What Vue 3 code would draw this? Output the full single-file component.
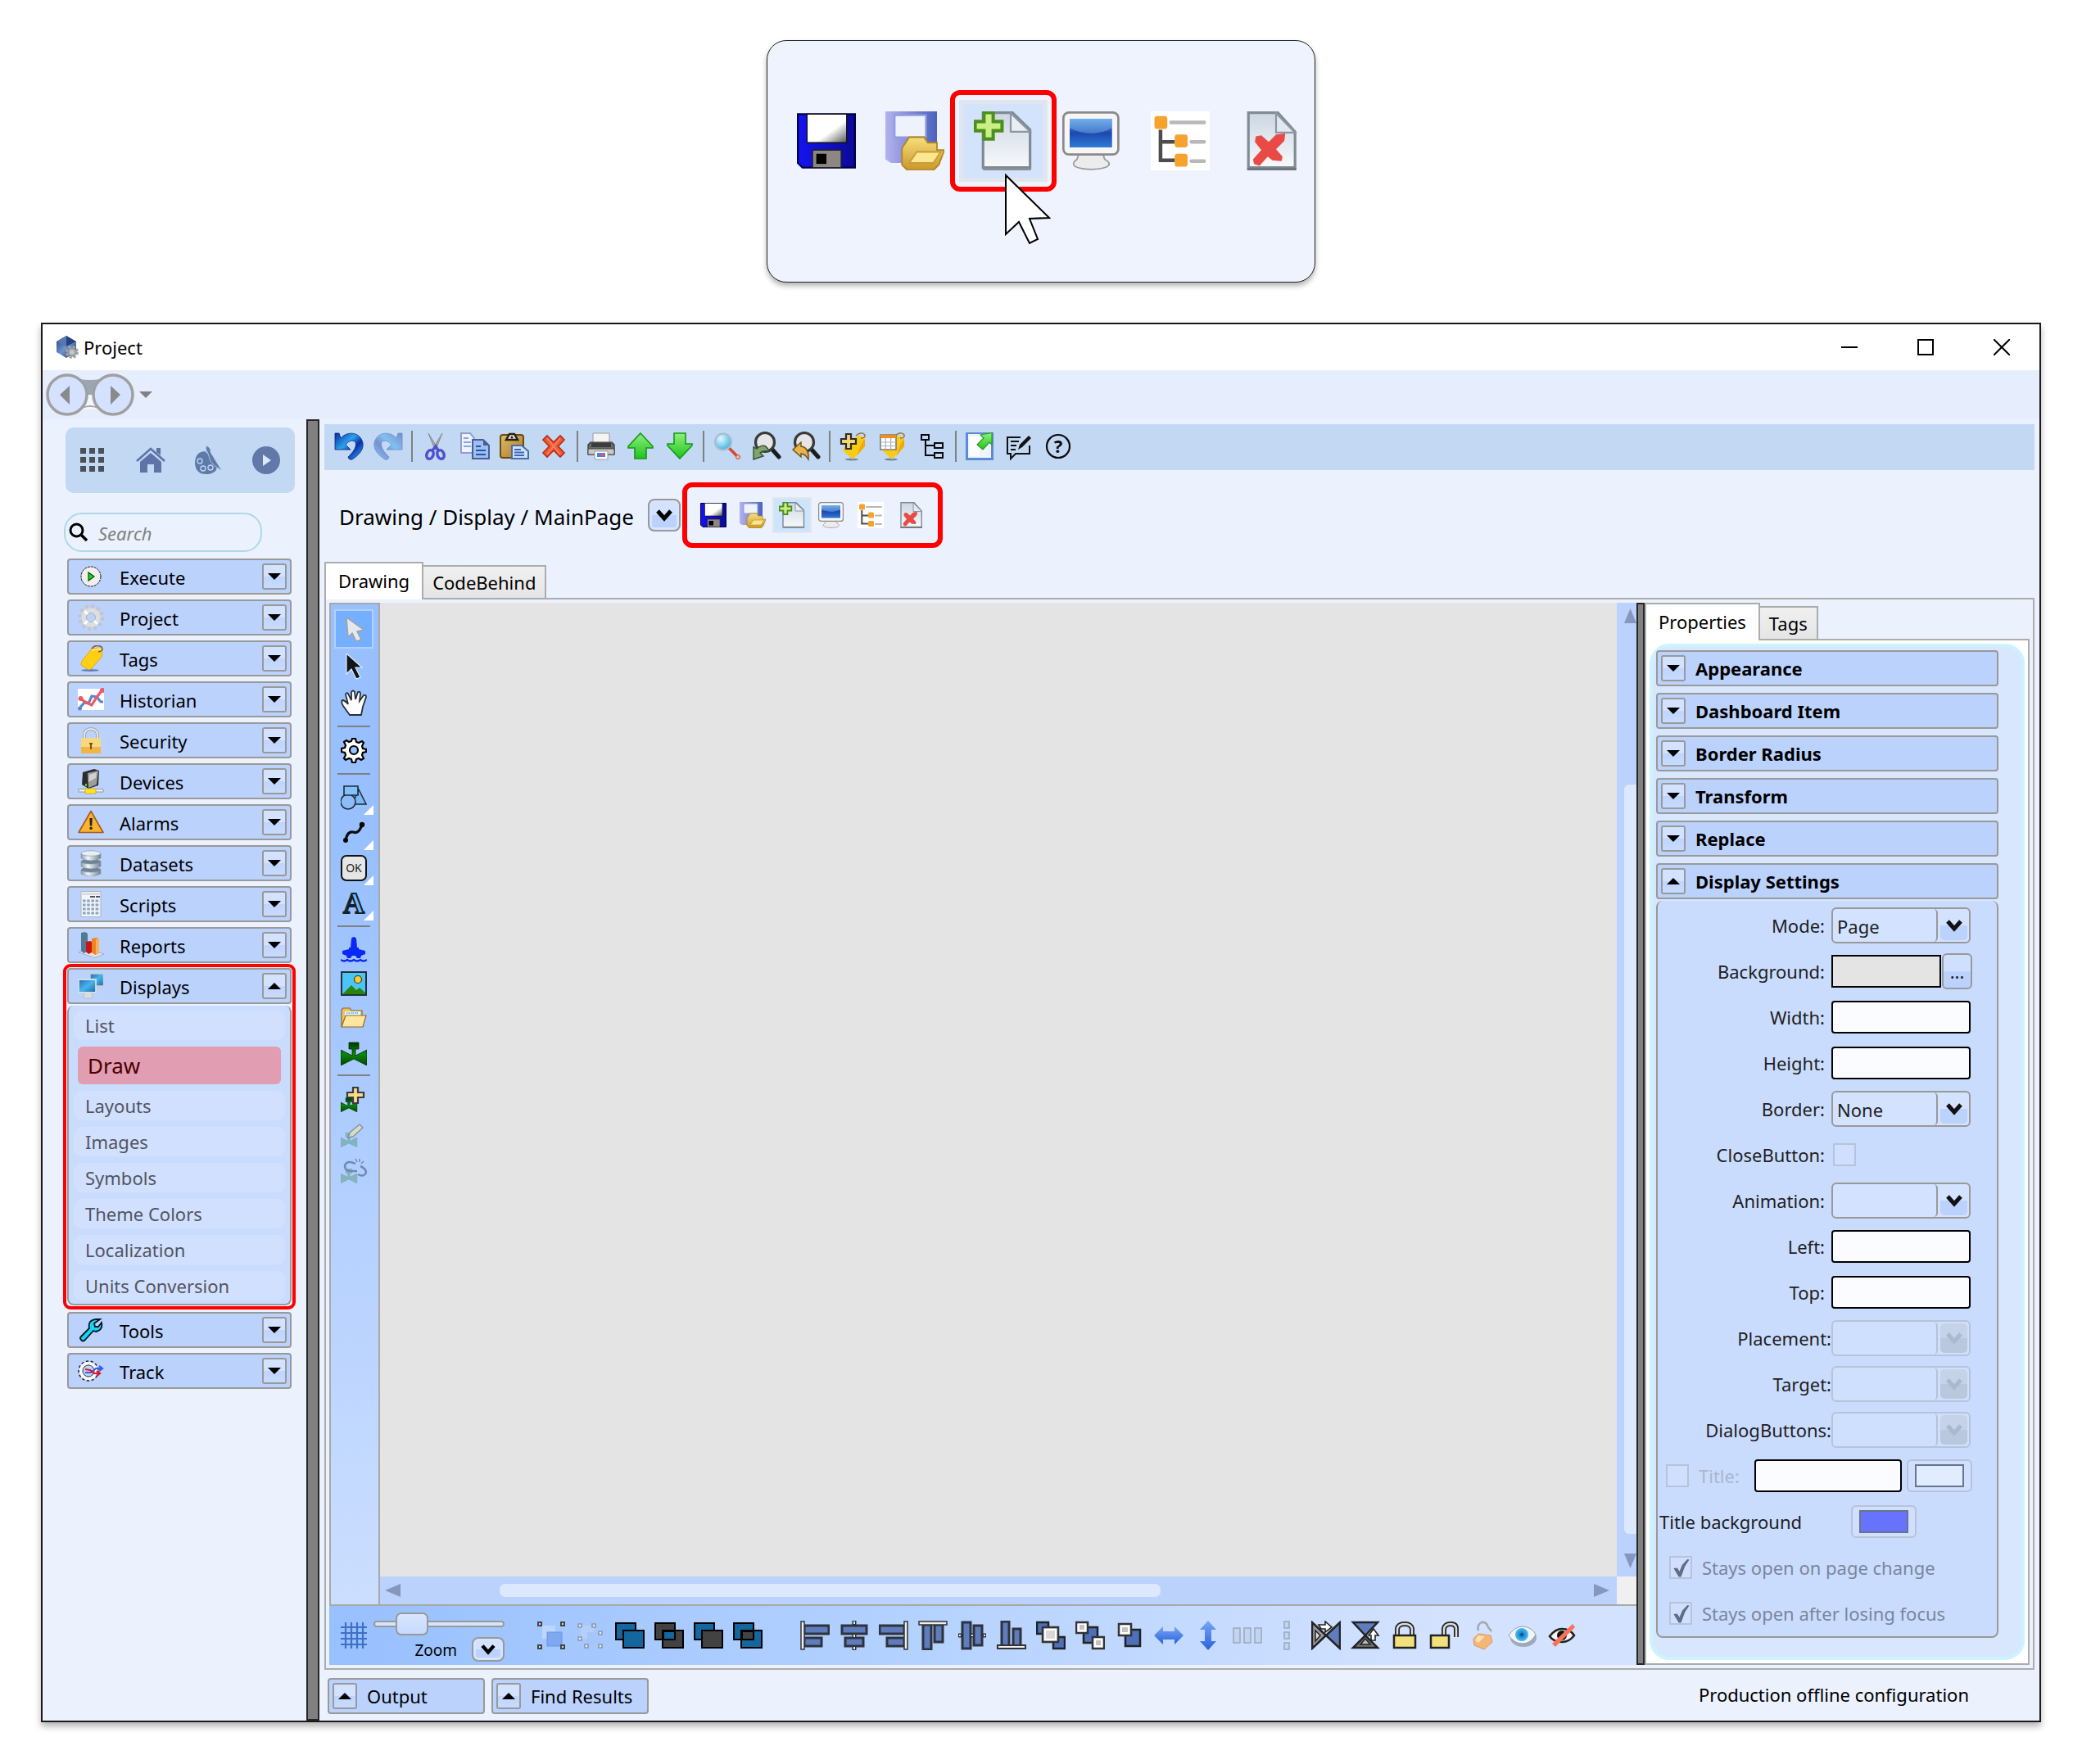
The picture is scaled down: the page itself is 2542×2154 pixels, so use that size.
<script setup>
import { ref } from 'vue'

const quickActions = [
  { icon: 'floppy', label: 'Save' },
  { icon: 'saveopen', label: 'Save and open' },
  { icon: 'newdoc', label: 'New', active: true },
  { icon: 'monitor', label: 'Preview' },
  { icon: 'treelist', label: 'Object tree' },
  { icon: 'deldoc', label: 'Delete' }
]

const mainTools = [
  ['undo', 'redo'],
  ['cut', 'copy', 'paste', 'remove'],
  ['print', 'up', 'down'],
  ['find', 'findprev', 'findnext'],
  ['tagadd', 'tagtable', 'hierarchy'],
  ['export', 'note', 'help']
]

const shortcuts = ['apps', 'home', 'palette', 'play']

const modules = [
  { icon: 'execute', label: 'Execute' },
  { icon: 'gearlight', label: 'Project' },
  { icon: 'tag', label: 'Tags' },
  { icon: 'historian', label: 'Historian' },
  { icon: 'security', label: 'Security' },
  { icon: 'devices', label: 'Devices' },
  { icon: 'alarms', label: 'Alarms' },
  { icon: 'datasets', label: 'Datasets' },
  { icon: 'scripts', label: 'Scripts' },
  { icon: 'reports', label: 'Reports' },
  {
    icon: 'displays',
    label: 'Displays',
    items: ['List', 'Draw', 'Layouts', 'Images', 'Symbols', 'Theme Colors', 'Localization', 'Units Conversion']
  },
  { icon: 'tools', label: 'Tools' },
  { icon: 'track', label: 'Track' }
]

const toolbox = [
  { cls: 'tall', items: [{ icon: 'pointer', on: true }, { icon: 'direct' }, { icon: 'hand' }] },
  { cls: 'tall', items: [{ icon: 'gear' }] },
  { cls: 'mid', items: [{ icon: 'shapes', more: true }, { icon: 'curve', more: true }, { icon: 'okbutton', more: true }, { icon: 'letter', more: true }] },
  { cls: 'low', items: [{ icon: 'buoy' }, { icon: 'image' }, { icon: 'folder' }, { icon: 'valve' }] },
  { cls: 'tall', items: [{ icon: 'valveadd' }, { icon: 'valveedit' }, { icon: 'valveunlink' }] }
]

const arrangeTools = [
  ['group', 'ungroup', 'union', 'xor', 'subtract', 'intersect'],
  ['alignleft', 'aligncenter', 'alignright', 'aligntop', 'alignmiddle', 'alignbottom', 'tofront', 'toback', 'backward',
    'samewidth', 'sameheight', 'spreadx', 'spready', 'fliph', 'flipv', 'lock', 'unlock', 'unlockall', 'eye', 'eyeoff']
]

// icons that carry a character on top of their shape
const glyphs = {
  help: { char: '?', x: 18, y: 26, cls: 'g-help' },
  alarms: { char: '!', x: 16, y: 25, cls: 'g-alarm' },
  okbutton: { char: 'OK', x: 16, y: 21, cls: 'g-ok' },
  letter: { char: 'A', x: 16, y: 28, cls: 'g-letter' }
}

const sections = ['Appearance', 'Dashboard Item', 'Border Radius', 'Transform', 'Replace', 'Display Settings']

const fields = [
  { label: 'Mode', kind: 'select', value: 'Page' },
  { label: 'Background', kind: 'color' },
  { label: 'Width', kind: 'text' },
  { label: 'Height', kind: 'text' },
  { label: 'Border', kind: 'select', value: 'None' },
  { label: 'CloseButton', kind: 'check' },
  { label: 'Animation', kind: 'select', value: '' },
  { label: 'Left', kind: 'text' },
  { label: 'Top', kind: 'text' },
  { label: 'Placement', kind: 'select', value: '', off: true },
  { label: 'Target', kind: 'select', value: '', off: true },
  { label: 'DialogButtons', kind: 'select', value: '', off: true }
]

const zoom = ref(32)
</script>

<template>
  <svg class="defs" aria-hidden="true">
    <defs>
      <linearGradient id="g-undo" x1="0" y1="0" x2="1" y2="1"><stop offset="0" stop-color="#0a2a9c" /><stop offset=".4" stop-color="#2aa4f0" /><stop offset=".62" stop-color="#0a2fa8" /><stop offset="1" stop-color="#38c0ff" /></linearGradient>
      <linearGradient id="g-shutter" x1="0" y1="0" x2="1" y2="1"><stop offset=".6" stop-color="#fff" /><stop offset="1" stop-color="#555" /></linearGradient>
      <linearGradient id="g-floppy" x1="0" x2="1"><stop offset="0" stop-color="#1414f0" /><stop offset="1" stop-color="#0a0a98" /></linearGradient>
      <linearGradient id="g-lav" x1="0" x2="1"><stop offset="0" stop-color="#b4b2ee" /><stop offset="1" stop-color="#4a62c0" /></linearGradient>
      <linearGradient id="g-gold" x1="0" y1="0" x2="0" y2="1"><stop offset="0" stop-color="#f7df7c" /><stop offset="1" stop-color="#c9972a" /></linearGradient>
      <linearGradient id="g-paper" x1="0" y1="0" x2="0" y2="1"><stop offset="0" stop-color="#ccd7e3" /><stop offset="1" stop-color="#f7f9fb" /></linearGradient>
      <linearGradient id="g-screen" x1="0" y1="0" x2="0" y2="1"><stop offset="0" stop-color="#5da0e8" /><stop offset=".5" stop-color="#1c49ae" /><stop offset="1" stop-color="#2f7ad6" /></linearGradient>
      <linearGradient id="g-teal" x1="0" y1="0" x2="1" y2="1"><stop offset="0" stop-color="#1c6db4" /><stop offset=".5" stop-color="#4bb4e8" /><stop offset="1" stop-color="#1765a8" /></linearGradient>
      <linearGradient id="g-green" x1="0" y1="0" x2="0" y2="1"><stop offset="0" stop-color="#8df07a" /><stop offset="1" stop-color="#1fc41f" /></linearGradient>
      <linearGradient id="g-silver" x1="0" x2="1"><stop offset="0" stop-color="#8a9cab" /><stop offset=".35" stop-color="#f2f6f8" /><stop offset="1" stop-color="#708494" /></linearGradient>
      <linearGradient id="g-clip" x1="0" y1="0" x2="1" y2="1"><stop offset="0" stop-color="#e0bc6c" /><stop offset="1" stop-color="#a87a24" /></linearGradient>
      <linearGradient id="g-blue" x1="0" y1="0" x2="0" y2="1"><stop offset="0" stop-color="#7aa6f6" /><stop offset="1" stop-color="#2a62d8" /></linearGradient>
      <linearGradient id="g-cube" x1="0" y1="0" x2="1" y2="1"><stop offset="0" stop-color="#1d3a7a" /><stop offset=".5" stop-color="#6f96cc" /><stop offset="1" stop-color="#122858" /></linearGradient>
      <linearGradient id="g-valve" x1="0" y1="0" x2="0" y2="1"><stop offset="0" stop-color="#003800" /><stop offset=".5" stop-color="#0a8a0a" /><stop offset="1" stop-color="#004800" /></linearGradient>
      <radialGradient id="g-lens" cx=".35" cy=".3" r=".8"><stop offset="0" stop-color="#e2f8ff" /><stop offset="1" stop-color="#33aede" /></radialGradient>
      <radialGradient id="g-eye"><stop offset="0" stop-color="#0a2a60" /><stop offset=".35" stop-color="#1e8ad0" /><stop offset="1" stop-color="#4cc0f0" /></radialGradient>
      <g id="valvebody"><path d="M0 13L14 20V12H10V4H22V12H18V20L32 13V32L16 24L0 32Z" /></g>
    </defs>

    <symbol id="i-chev" viewBox="0 0 20 16"><path d="M2 3L10 12L18 3" fill="none" stroke="currentColor" stroke-width="5" /></symbol>
    <symbol id="i-tri" viewBox="0 0 16 8"><path d="M0 0H16L8 8Z" fill="currentColor" /></symbol>

    <symbol id="i-floppy" viewBox="0 0 32 32"><path d="M.5 1.5H31.5V30.5H3L.5 28Z" fill="url(#g-floppy)" stroke="#00004a" /><path d="M5.500 1.500H27V17H5.500Z" fill="url(#g-shutter)" stroke="#111" stroke-width=".6" /><path d="M8.500 21H24V30.500H8.500Z" fill="#8d8682" stroke="#222" stroke-width=".6" /><path d="M10.500 23H16V28.500H10.500Z" fill="#000" /></symbol>
    <symbol id="i-saveopen" viewBox="0 0 32 32"><path d="M0 0H28V28H3L0 26Z" fill="url(#g-lav)" /><path d="M5 2H22V14H5Z" fill="#eef2fc" stroke="#8f9be0" /><path d="M13 14H21L23 17H28V21H32L29 29L26 32H12L9 29V20Z" fill="url(#g-gold)" stroke="#b18622" stroke-width=".8" /><path d="M13 28L17 22H30L26 28Z" fill="#fbe88e" stroke="#c79c38" stroke-width=".8" /></symbol>
    <symbol id="i-newdoc" viewBox="0 0 32 32"><path d="M5 0.700H21L30.500 10V30.500H5Z" fill="url(#g-paper)" stroke="#7d8994" stroke-width="1.400" /><path d="M20 1V11H30.500Z" fill="#e9eef3" stroke="#8b97a3" /><path d="M5 31.300H31" stroke="#8a8f94" stroke-width="1.400" /><path d="M5.500 .7H10.500V5.500H15.300V10.500H10.500V15H5.500V10.500H.7V5.500H5.500Z" fill="#c9ef86" stroke="#4c8f1c" stroke-width="1.800" /></symbol>
    <symbol id="i-monitor" viewBox="0 0 32 32"><path d="M9 23H22L23 26C27 28 27 31 16 31.500C4 31 5 28 8 26Z" fill="#ececee" stroke="#9a9a9a" stroke-width=".8" /><rect x=".6" y=".6" width="29.800" height="22.800" rx="3" fill="#f6f6f6" stroke="#8a8a8a" stroke-width="1.200" /><path d="M4 4H27V19.500H4Z" fill="url(#g-screen)" /><path d="M4 4H27V9Q16 15 4 9Z" fill="#8fc4f6" opacity=".4" /></symbol>
    <symbol id="i-treelist" viewBox="0 0 32 32"><path d="M0 0H32V32H0Z" fill="#fff" /><path d="M5.300 10V26.500H13M5.300 16.500H13" fill="none" stroke="#4d4d4d" stroke-width="2" /><path d="M11 6H29M22 16.500H29M22 27H29" stroke="#b8b8b8" stroke-width="2" stroke-linecap="round" /><g fill="#f5a32c"><rect x="2" y="2.500" width="7" height="7" rx="1.500" /><rect x="13" y="12.500" width="7" height="7" rx="1.500" /><rect x="13" y="23" width="7" height="7" rx="1.500" /></g></symbol>
    <symbol id="i-deldoc" viewBox="0 0 32 32"><path d="M5 .7H21L30.300 11V30.500H5Z" fill="url(#g-paper)" stroke="#7f8b95" stroke-width="1.400" /><path d="M20 1V11.500H30.300Z" fill="#e3e9ee" stroke="#8b97a3" /><path d="M4.300 31.300H31" stroke="#6f777e" stroke-width="1.400" /><path d="M9 13.500L12 13L16 16.500L20 12.500L25 12L24.500 16L20 20.500L23.500 24.500L23 27L18 26.500L15.500 24.500L11 29.500L8 28.500L7.500 26L12 21L8.500 16.500Z" fill="#ea4a46" /></symbol>

    <symbol id="i-undo" viewBox="0 0 36 36"><path d="M1 2V22H20L14 16C19 9 27 10 26.500 16C26 22 21 27 17 31Q18 35 22 34C31 28 36 22 35 14C32 0 16 -1 8 8L6 2Z" fill="url(#g-undo)" stroke="#0a2080" stroke-width=".8" /></symbol>
    <symbol id="i-redo" viewBox="0 0 36 36"><g transform="matrix(-1 0 0 1 36 0)" opacity=".42"><path d="M1 2V22H20L14 16C19 9 27 10 26.500 16C26 22 21 27 17 31Q18 35 22 34C31 28 36 22 35 14C32 0 16 -1 8 8L6 2Z" fill="url(#g-undo)" stroke="#0a2080" stroke-width=".8" /></g></symbol>
    <symbol id="i-cut" viewBox="0 0 36 36"><path d="M9 2L20 20L17 22ZM26 2L15 20L18 22Z" fill="#a8a8a8" stroke="#8c8c8c" /><g fill="none" stroke="#5050d0" stroke-width="3.500"><ellipse cx="11" cy="28" rx="4" ry="5.500" transform="rotate(20 11 28)" /><ellipse cx="24" cy="28" rx="4" ry="5.500" transform="rotate(-20 24 28)" /><path d="M14 23L18 18L21 23" /></g></symbol>
    <symbol id="i-copy" viewBox="0 0 36 36"><path d="M1 2H12L17 8V26H1Z" fill="#eef3fc" stroke="#8e9fd0" stroke-width="2" /><path d="M4 8H10M4 13H13M4 18H13" stroke="#8aa6dc" stroke-width="2" /><path d="M15 10H28L35 17V33H15Z" fill="#9cc0f4" stroke="#4a5e96" stroke-width="2" /><path d="M28 10V17H35Z" fill="#4a5e96" /><path d="M19 18H25M19 23H31M19 28H31" stroke="#2a52a4" stroke-width="2" /></symbol>
    <symbol id="i-paste" viewBox="0 0 36 36"><rect x="1" y="4" width="28" height="28" rx="3" fill="url(#g-clip)" stroke="#6c4a10" stroke-width="2" /><path d="M8 10L12 3H18L22 10Z" fill="#e8e8e8" stroke="#2a2010" stroke-width="2.500" /><circle cx="15" cy="7" r="1.500" fill="#222" /><path d="M15 17H27L35 24V33H15Z" fill="#cfe2fc" stroke="#4f6ba6" stroke-width="2" /><path d="M18 22H26M18 25.500H30M18 29H30" stroke="#3e66b8" stroke-width="2" /></symbol>
    <symbol id="i-remove" viewBox="0 0 36 36"><path d="M10 5L18 13L26 5L31 10L23.500 18L31 26L26 31L18 23L10 31L5 26L12.500 18L5 10Z" fill="#ee5a34" stroke="#b82a14" stroke-width="1.600" /><path d="M10 8L26 28M26 8L10 28" stroke="#f99878" stroke-width="1.500" opacity=".7" /></symbol>
    <symbol id="i-print" viewBox="0 0 36 36"><path d="M8 2H28V14H8Z" fill="#f4f4f4" stroke="#9a9a9a" /><path d="M5 13H31L34 16V28H2V16Z" fill="#6b6b6b" stroke="#333" stroke-width="1.200" /><path d="M6 14H30V19H6Z" fill="#3c3c3c" /><path d="M2 21H34V28H2Z" fill="#c9c9c9" stroke="#444" /><path d="M10 24H26V34H10Z" fill="#fff" stroke="#999" /><path d="M13 26H23V31H13Z" fill="#4a7cf0" /><path d="M18 27H22V30H18Z" fill="#e8584a" /></symbol>
    <symbol id="i-up" viewBox="0 0 36 36"><path d="M18 2L33 18V20H25V33H11V20H3V18Z" fill="url(#g-green)" stroke="#17961a" stroke-width="1.600" /></symbol>
    <symbol id="i-down" viewBox="0 0 36 36"><path d="M18 33L33 17V15H25V2H11V15H3V17Z" fill="url(#g-green)" stroke="#17961a" stroke-width="1.600" /></symbol>
    <symbol id="i-find" viewBox="0 0 36 36"><path d="M20 20L30 30" stroke="#d24a34" stroke-width="3.500" /><circle cx="31" cy="31" r="2.500" fill="#f8b8a8" stroke="#c24a34" /><circle cx="13" cy="12.500" r="10" fill="url(#g-lens)" stroke="#a9bccb" stroke-width="2" /></symbol>
    <symbol id="i-findprev" viewBox="0 0 36 36"><path d="M25 22L33 31" stroke="#1c1c1c" stroke-width="5" stroke-linecap="round" /><circle cx="16" cy="13" r="11.500" fill="#e6e6e6" stroke="#3a3a3a" stroke-width="3.200" /><path d="M2 34V19L6 21Q16 12 21 24Q13 23 10 26L14 30Z" fill="#7fa46e" stroke="#3a4e34" stroke-width="1.400" /></symbol>
    <symbol id="i-findnext" viewBox="0 0 36 36"><path d="M25 22L33 31" stroke="#1c1c1c" stroke-width="5" stroke-linecap="round" /><circle cx="16" cy="13" r="11.500" fill="#e6e6e6" stroke="#3a3a3a" stroke-width="3.200" /><path d="M2 22L12 13V18Q22 19 21 34Q17 27 12 27V31Z" fill="#e9b24a" stroke="#6c5018" stroke-width="1.400" /></symbol>
    <symbol id="i-tagadd" viewBox="0 0 36 36"><ellipse cx="16" cy="34" rx="8" ry="1.500" fill="#6d86a4" /><path d="M12 10L26 5L32 9V18L17 34L5 23Z" fill="#fbcb14" /><path d="M22 30L32 18V9L28 14Z" fill="#f3a80c" /><path d="M21 5Q28 -1 32 4Q33 8 27 8" fill="none" stroke="#9a7436" stroke-width="1.500" /><path d="M9 3H15V9H21V15H15V21H9V15H3V9H9Z" fill="#f4d774" stroke="#2e2e2e" stroke-width="2.200" /></symbol>
    <symbol id="i-tagtable" viewBox="0 0 36 36"><ellipse cx="16" cy="34" rx="8" ry="1.500" fill="#6d86a4" /><path d="M12 10L26 5L32 9V18L17 34L5 23Z" fill="#fbcb14" /><path d="M22 30L32 18V9L28 14Z" fill="#f3a80c" /><path d="M21 5Q28 -1 32 4Q33 8 27 8" fill="none" stroke="#9a7436" stroke-width="1.500" /><path d="M3 4H22V22H3Z" fill="#fff" stroke="#7b7b7b" stroke-width="1.600" /><path d="M3 4H22V8H3Z" fill="#f28e16" /><path d="M3 13H22M3 17.500H22M9.300 8V22M15.600 8V22" stroke="#a8b2bc" stroke-width="1.200" /></symbol>
    <symbol id="i-hierarchy" viewBox="0 0 36 36"><path d="M5 4H14V10H5ZM21 14H31V20H21ZM21 26H31V32H21ZM10 10V29H21M10 17H21" fill="none" stroke="#0a0a0a" stroke-width="2" /></symbol>
    <symbol id="i-export" viewBox="0 0 36 36"><path d="M1 1H35V35H1Z" fill="#5c8ad8" /><path d="M4 3H32V32H4Z" fill="#eef5ff" /><path d="M6 6H18V30H6Z" fill="#fff" /><path d="M19 4L33 1.500V16L30 13L22 22L15 16L23 8Z" fill="url(#g-green)" stroke="#2a9a24" stroke-width="1.200" /></symbol>
    <symbol id="i-note" viewBox="0 0 36 36"><path d="M20 7H4V27H8V33L14 27H31V17" fill="none" stroke="#111" stroke-width="2" /><path d="M8 12H18M8 17H15M8 22H14" stroke="#111" stroke-width="2" /><path d="M17 22L19 16L30 5L33 8L22 19Z" fill="#111" /></symbol>
    <symbol id="i-help" viewBox="0 0 36 36"><circle cx="18" cy="18" r="14" fill="none" stroke="#0a0a0a" stroke-width="2.200" /></symbol>

    <symbol id="i-apps" viewBox="0 0 36 36"><path d="M3 3H10V10H3ZM14 3H21V10H14ZM25 3H32V10H25ZM3 14H10V21H3ZM14 14H21V21H14ZM25 14H32V21H25ZM3 25H10V32H3ZM14 25H21V32H14ZM25 25H32V32H25Z" fill="#4a5258" /></symbol>
    <symbol id="i-home" viewBox="0 0 36 36"><path d="M1 19L18 4L35 19" fill="none" stroke="#5e74a8" stroke-width="2.500" /><path d="M25 3H30V12L25 8Z" fill="#5e74a8" /><path d="M5 20L18 9L31 20V33H22V23H14V33H5Z" fill="#5e74a8" /></symbol>
    <symbol id="i-palette" viewBox="0 0 36 36"><path d="M14 7Q2 8 2 22Q3 35 16 35Q28 35 29 26L20 12Z" fill="#5e7ba8" /><g fill="none" stroke="#c2d8f3" stroke-width="1.300"><circle cx="8" cy="19" r="3" /><circle cx="12" cy="28" r="3" /><circle cx="21" cy="27" r="3" /></g><path d="M16 0Q22 3 21 8L35 31Q24 24 21 19L18 10Q14 5 16 0Z" fill="#5e7ba8" stroke="#c2d8f3" stroke-width=".8" /></symbol>
    <symbol id="i-play" viewBox="0 0 36 36"><circle cx="18" cy="18" r="17" fill="#6178a8" /><path d="M14 11V25L24 18Z" fill="#dbe7fa" /></symbol>
    <symbol id="i-search" viewBox="0 0 24 24"><circle cx="9.500" cy="9.500" r="7.500" fill="none" stroke="#000" stroke-width="3" /><path d="M15 15L22 22" stroke="#000" stroke-width="3.500" /></symbol>
    <symbol id="i-cube" viewBox="0 0 28 28"><path d="M12 0L24 7V20L12 27L0 20V7Z" fill="url(#g-cube)" /><path d="M12 0V13L0 7Z" fill="#5878b4" /><path d="M12 0V13L24 7Z" fill="#24427e" /><circle cx="19" cy="20" r="6" fill="none" stroke="#a7a7a7" stroke-width="4" stroke-dasharray="3 1.700" /><circle cx="19" cy="20" r="4.500" fill="#b8c4da" stroke="#9a9a9a" stroke-width="2.500" /></symbol>

    <symbol id="i-execute" viewBox="0 0 32 32"><circle cx="16" cy="16" r="12" fill="#efefef" stroke="#111" stroke-width="1" stroke-dasharray="3 1" /><path d="M13 11V21L20 16Z" fill="#10e010" stroke="#0a4a0a" stroke-width="1.200" /></symbol>
    <symbol id="i-gearlight" viewBox="0 0 32 32"><circle cx="16" cy="16" r="13.500" fill="none" stroke="#c4c4c4" stroke-width="5" stroke-dasharray="3.500 3.568" /><circle cx="16" cy="16" r="8.500" fill="none" stroke="#dedede" stroke-width="6" /><circle cx="16" cy="16" r="5.500" fill="none" stroke="#b0b0b0" stroke-width="1" /><path d="M8 8L12 12M24 24L20 20M8 24L12 20" stroke="#fff" stroke-width="3" /></symbol>
    <symbol id="i-tag" viewBox="0 0 32 32"><ellipse cx="15" cy="30.500" rx="11" ry="1.500" fill="#5b82bc" /><path d="M17 4L27 3L30 9L29 14L17 28Q14 31 12 29L4 24Q4 20 6 18Z" fill="#ffcf16" stroke="#e9a70c" /><path d="M17 6L27 4L29 8" fill="none" stroke="#fff2a0" stroke-width="1.500" /><path d="M17 4Q22 -2 29 2Q32 7 25 8" fill="none" stroke="#8a5a2c" stroke-width="1.600" /></symbol>
    <symbol id="i-historian" viewBox="0 0 32 32"><path d="M0 3H32V29H0Z" fill="#fff" /><path d="M1 28L8 20L13 21L17 12L23 13L28 19L31 19" fill="none" stroke="#5c86cc" stroke-width="3.200" /><path d="M3 15L9 19L17 23L22 15L30 4" fill="none" stroke="#ea5a62" stroke-width="3.200" /><circle cx="3.500" cy="15" r="3" fill="#ea5a62" /><circle cx="30" cy="5" r="3" fill="#ea5a62" /><circle cx="2.500" cy="27" r="2.500" fill="#5c86cc" /></symbol>
    <symbol id="i-security" viewBox="0 0 32 32"><path d="M8 15V9Q9 2 16 2Q23 2 24 9V15" fill="none" stroke="#a3acb2" stroke-width="4" /><path d="M8 15V9Q9 2 16 2Q23 2 24 9V15" fill="none" stroke="#eef2f4" stroke-width="1.600" /><rect x="4" y="13" width="24" height="19" rx="1.500" fill="#f9d77c" /><path d="M4 24H28V32H4Z" fill="#ef9f1c" opacity=".6" /><path d="M16 19V27M14 20H18" stroke="#7a5418" stroke-width="2" /></symbol>
    <symbol id="i-devices" viewBox="0 0 32 32"><path d="M6 5L20 1L26 3L25 21L13 25L5 20Z" fill="#2c2c2c" /><path d="M12 6L25 3L23 20L13 24Z" fill="#9c9c9c" /><path d="M14 8L23 5L22 12L13 17Z" fill="#d0d0d0" /><path d="M9 19H11V22H9Z" fill="#3fe04a" /><path d="M1 25.500H31V29H1Z" fill="#eee" stroke="#888" stroke-width=".8" /><path d="M9 25H22V31H9Z" fill="#ffe12c" stroke="#caa30a" stroke-width=".8" /></symbol>
    <symbol id="i-alarms" viewBox="0 0 32 32"><path d="M16 2.500L31 28.500H1Z" fill="#f9b32c" stroke="#a8561c" stroke-width="1.600" stroke-linejoin="round" /></symbol>
    <symbol id="i-datasets" viewBox="0 0 32 32"><g stroke="#7f92a2" stroke-width=".6"><path d="M4 24V29Q16 35 28 29V24Z" fill="url(#g-silver)" /><ellipse cx="16" cy="24" rx="12" ry="3" fill="#6f8494" /><path d="M4 14V20Q16 26 28 20V14Z" fill="url(#g-silver)" /><ellipse cx="16" cy="14" rx="12" ry="3" fill="#6f8494" /><path d="M4 4V10Q16 16 28 10V4Z" fill="url(#g-silver)" /><ellipse cx="16" cy="4" rx="12" ry="3.200" fill="#e8eef2" /></g></symbol>
    <symbol id="i-scripts" viewBox="0 0 32 32"><path d="M4 .5H28V31.500H4Z" fill="#f2f5f8" stroke="#aab4be" /><path d="M4 2H28V5H4Z" fill="#d8dee4" /><path d="M15 7H27" stroke="#222" stroke-width="1.500" stroke-dasharray="6 1" /><g stroke="#8ba6bf" stroke-width="3" stroke-dasharray="3.600 1.600"><path d="M6 12H27M6 17H27M6 22H27M6 27H27" /></g></symbol>
    <symbol id="i-reports" viewBox="0 0 32 32"><path d="M1 25L12 20L32 27L21 31.500Z" fill="#dfe3ea" stroke="#9aa2ae" stroke-width=".8" /><path d="M4 1L9 0L12 2V24L7 26L4 23Z" fill="#527a94" /><path d="M10 12L15 11L17 12V25L13 27L10 24Z" fill="#cc1414" /><path d="M17 8L23 7L26 9V26L21 28L17 25Z" fill="#ee8420" /><path d="M22 9L26 8V26L22 28Z" fill="#f9b060" /></symbol>
    <symbol id="i-displays" viewBox="0 0 32 32"><path d="M24 16H28L30 19H22Z" fill="#c8ccd2" /><path d="M15 1H31.500V16H15Z" fill="url(#g-teal)" stroke="#c5d0da" stroke-width="1.500" /><path d="M9 24H16L19 30Q12 33 6 30Z" fill="#d9dde2" stroke="#a4aab2" stroke-width=".6" /><path d="M1 8H22V24H1Z" fill="url(#g-teal)" stroke="#d4dce4" stroke-width="1.800" /></symbol>
    <symbol id="i-tools" viewBox="0 0 32 32"><path d="M27 3L20 8L21 12L25 12L29 7Q31 16 22 18L19 17L9 28Q6 31 4 28Q2 26 4 24L14 14Q12 4 22 3Z" fill="#18d4fa" stroke="#06161c" stroke-width="1.800" /></symbol>
    <symbol id="i-track" viewBox="0 0 32 32"><circle cx="13" cy="16" r="11" fill="none" stroke="#222" stroke-width="3.500" stroke-dasharray="3 2.400" /><circle cx="13" cy="16" r="9.500" fill="#f6f8fc" stroke="#f6f8fc" stroke-width="3.500" /><circle cx="13" cy="16" r="7" fill="#bbd2fd" stroke="#333" stroke-width="1" /><path d="M9 18L16 18L22 13H29M26 10L30 13L26 16" fill="none" stroke="#3a5ce8" stroke-width="2.200" /><path d="M9 14L15 15L20 19H26M23 16L27 19L23 22" fill="none" stroke="#d81c24" stroke-width="2.200" /></symbol>

    <symbol id="i-pointer" viewBox="0 0 32 32"><path d="M7 2L9 26L14 21L19 31L25 29L20 19L28 17Z" fill="#e6e9ec" stroke="#a2a2a2" stroke-width="1.500" /></symbol>
    <symbol id="i-direct" viewBox="0 0 32 32"><path d="M7 0V25L13 19L19 31L24 29L18 17L26 17Z" fill="#10161c" stroke="#e4edf8" stroke-width="1.200" /></symbol>
    <symbol id="i-hand" viewBox="0 0 32 32"><path d="M11 31L3 20Q0 15 2 13Q5 13 9 18L6 6Q7 3 9 5L13 13L13 3Q15 0 17 3L18 12L21 3Q24 2 24 5L23 14L28 7Q31 6 31 9L27 21L25 31Z" fill="#fff" stroke="#2a2f38" stroke-width="1.800" /></symbol>
    <symbol id="i-gear" viewBox="0 0 32 32"><path d="M14 2H18L19 6L22 7L26 5L28 7L26 11L27 14L31 15V18L27 19L26 22L28 26L25 28L22 26L19 27L18 31H14L13 27L10 26L6 28L4 26L6 22L5 19L1 18V14L5 13L6 10L4 6L7 4L10 6L13 5Z" fill="#fff" stroke="#000" stroke-width="2.200" /><circle cx="16" cy="16" r="5" fill="#9cc4ff" stroke="#000" stroke-width="2.200" /></symbol>
    <symbol id="i-shapes" viewBox="0 0 32 32"><path d="M22 6L31 24H14Z" fill="#7ab8f8" stroke="#1c2a38" stroke-width="1.500" /><circle cx="9" cy="21" r="9" fill="#8cbdf8" stroke="#1c2a38" stroke-width="1.500" /><path d="M4 2H21V13H4Z" fill="#84c0fa" stroke="#1c2a38" stroke-width="1.600" /></symbol>
    <symbol id="i-curve" viewBox="0 0 32 32"><path d="M6 25Q8 14 15 15Q22 18 26 6" fill="none" stroke="#0c0c0c" stroke-width="3.200" /><circle cx="6" cy="25" r="3" /><circle cx="26" cy="6" r="3.200" /></symbol>
    <symbol id="i-okbutton" viewBox="0 0 32 32"><rect x="1" y="1" width="30" height="30" rx="6" fill="#e6e6e6" stroke="#111" stroke-width="2" /></symbol>
    <symbol id="i-letter" viewBox="0 0 32 32"><path d="M2 28H2Z" /></symbol>
    <symbol id="i-buoy" viewBox="0 0 32 32"><path d="M12 14L13 3Q16 -1 19 3L20 14L22 14V16L30 18V22L25 24L24 27H20L18 24H14L12 27H8L7 24L2 22V18L10 16V14Z" fill="#0a28f8" /><path d="M0 29Q4 32 8 29Q12 32 16 29Q20 32 24 29Q28 32 32 29" fill="none" stroke="#0a28f8" stroke-width="2.200" /></symbol>
    <symbol id="i-image" viewBox="0 0 32 32"><path d="M1 2H31V30H1Z" fill="#4cc4f6" /><path d="M1 30L13 18L19 24L23 21L31 28V30Z" fill="#2a8408" /><circle cx="21" cy="11" r="4.500" fill="#f6cf2e" stroke="#333" stroke-width="1.200" /><path d="M1 2H31V30H1Z" fill="none" stroke="#22303a" stroke-width="2" /></symbol>
    <symbol id="i-folder" viewBox="0 0 32 32"><path d="M1 27V6L3 4H11L13 7H26V13" fill="#ecc264" stroke="#8c6a24" stroke-width="1.200" /><path d="M5 8H24V14H5Z" fill="#eef8fc" /><path d="M7 10H22" stroke="#6cb8d8" stroke-width="2" stroke-dasharray="1.500 1" /><path d="M1 27L6 13H31L27 27Z" fill="#ffe6a0" stroke="#8c6a24" stroke-width="1.200" /></symbol>
    <symbol id="i-valve" viewBox="0 0 32 32"><use href="#valvebody" fill="url(#g-valve)" stroke="#022a02" stroke-width=".8" /></symbol>
    <symbol id="i-valveadd" viewBox="0 0 32 32"><g transform="translate(0 12) scale(.62)"><use href="#valvebody" fill="url(#g-valve)" stroke="#022a02" /></g><path d="M15 2H21V8H28V14H21V21H15V14H8V8H15Z" fill="#f6dd84" stroke="#3a3a44" stroke-width="2.200" /></symbol>
    <symbol id="i-valveedit" viewBox="0 0 32 32"><g transform="translate(0 11) scale(.62)" opacity=".35"><use href="#valvebody" fill="#2a8a4a" stroke="#1c5a3a" /></g><path d="M9 19L11 13L23 3L27 7L15 18Z" fill="#dfe2b8" stroke="#7c8c9c" stroke-width="1.500" opacity=".85" /></symbol>
    <symbol id="i-valveunlink" viewBox="0 0 32 32"><g transform="translate(0 11) scale(.62)" opacity=".35"><use href="#valvebody" fill="#2a8a4a" stroke="#1c5a3a" /></g><g fill="none" stroke="#7189b4" stroke-width="2.500"><path d="M18 7Q8 2 5 9Q5 17 14 16H20M24 10Q31 13 31 18Q28 24 21 20" /><path d="M18 1L20 5M23 1V5M28 4L25 7" stroke-width="1.500" /></g></symbol>

    <symbol id="i-grid" viewBox="0 0 36 36"><path d="M8 2V34M15 2V34M22 2V34M29 2V34M2 8H34M2 15H34M2 22H34M2 29H34" stroke="#3e70c8" stroke-width="2.200" /></symbol>
    <symbol id="i-group" viewBox="0 0 36 36"><path d="M7 6H23V22H7Z" fill="#bcd6fc" /><path d="M13 14H31V31H13Z" fill="#7fa8f0" stroke="#6a94e4" /><path d="M2 2H6V6H2ZM30 2H34V6H30ZM2 30H6V34H2ZM30 30H34V34H30Z" fill="#ddd" stroke="#444" stroke-width="2" /></symbol>
    <symbol id="i-ungroup" viewBox="0 0 36 36"><path d="M6 6H22V22H6Z" fill="#b4d0fa" /><path d="M14 14H30V30H14Z" fill="#a4c6fa" /><path d="M3 4H7V8H3ZM20 4H24V8H20ZM3 20H7V24H3ZM28 13H32V17H28ZM11 29H15V33H11ZM28 29H32V33H28Z" fill="#e4ecf8" stroke="#8c98ac" stroke-width="1.600" /></symbol>
    <symbol id="i-union" viewBox="0 0 36 36"><path d="M1 3H25V23H1Z" fill="#14669e" stroke="#000" stroke-width="2" /><path d="M10 12H35V33H10Z" fill="#14669e" stroke="#000" stroke-width="2" /></symbol>
    <symbol id="i-xor" viewBox="0 0 36 36"><path d="M1 3H25V23H1ZM10 12H35V33H10Z" fill="#424242" stroke="#000" stroke-width="2" /><path d="M11 13H25V23H11Z" fill="#14669e" stroke="#000" stroke-width="2" /></symbol>
    <symbol id="i-subtract" viewBox="0 0 36 36"><path d="M1 3H25V23H1Z" fill="#14669e" stroke="#000" stroke-width="2" /><path d="M10 12H35V33H10Z" fill="#424242" stroke="#000" stroke-width="2" /></symbol>
    <symbol id="i-intersect" viewBox="0 0 36 36"><path d="M1 3H25V23H1ZM10 12H35V33H10Z" fill="#14669e" stroke="#000" stroke-width="2" /><path d="M11 13H25V23H11Z" fill="#424242" stroke="#000" stroke-width="2" /></symbol>
    <symbol id="i-alignleft" viewBox="0 0 36 36"><path d="M5 6H35V16H5ZM5 21H26V31H5Z" fill="#5f7dbc" stroke="#2e323c" stroke-width="3" /><path d="M1 1H5V35H1Z" fill="#eee" stroke="#333" stroke-width="1.500" /></symbol>
    <symbol id="i-aligncenter" viewBox="0 0 36 36"><path d="M18 0V36" stroke="#333" stroke-width="5" /><path d="M3 6H33V16H3ZM7 21H29V31H7Z" fill="#5f7dbc" stroke="#2e323c" stroke-width="3" /><path d="M18 1V4M18 17V20M18 32V35" stroke="#eee" stroke-width="2" /></symbol>
    <symbol id="i-alignright" viewBox="0 0 36 36"><path d="M1 6H31V16H1ZM10 21H31V31H10Z" fill="#5f7dbc" stroke="#2e323c" stroke-width="3" /><path d="M31 1H35V35H31Z" fill="#eee" stroke="#333" stroke-width="1.500" /></symbol>
    <symbol id="i-aligntop" viewBox="0 0 36 36"><path d="M6 5H16V35H6ZM20 5H30V26H20Z" fill="#5f7dbc" stroke="#2e323c" stroke-width="3" /><path d="M1 1H35V5H1Z" fill="#eee" stroke="#333" stroke-width="1.500" /></symbol>
    <symbol id="i-alignmiddle" viewBox="0 0 36 36"><path d="M1 18H35" stroke="#333" stroke-width="5" /><path d="M6 2H16V34H6ZM20 6H30V30H20Z" fill="#5f7dbc" stroke="#2e323c" stroke-width="3" /><path d="M2 18H4M17 18H19M32 18H34" stroke="#eee" stroke-width="2" /></symbol>
    <symbol id="i-alignbottom" viewBox="0 0 36 36"><path d="M6 1H15V31H6ZM20 10H29V31H20Z" fill="#5f7dbc" stroke="#2e323c" stroke-width="3" /><path d="M1 30H35V34H1Z" fill="#eee" stroke="#333" stroke-width="2" /></symbol>
    <symbol id="i-tofront" viewBox="0 0 36 36"><path d="M1 2H15V16H1ZM21 20H35V34H21Z" fill="#4d70b8" stroke="#222" stroke-width="2.500" /><path d="M8 8H27V26H8Z" fill="#d8d8d8" stroke="#333" stroke-width="2.500" /><path d="M11 11H24V23H11Z" fill="none" stroke="#fff" stroke-width="2" /></symbol>
    <symbol id="i-toback" viewBox="0 0 36 36"><path d="M10 8H27V27H10Z" fill="#4d70b8" stroke="#222" stroke-width="2.500" /><path d="M1 2H15V15H1ZM21 20H35V34H21Z" fill="#fff" stroke="#333" stroke-width="2.500" /><path d="M5 5H11V11H5ZM25 24H31V30H25Z" fill="#c2c2c2" /></symbol>
    <symbol id="i-backward" viewBox="0 0 36 36"><path d="M13 11H31V31H13Z" fill="#4d70b8" stroke="#222" stroke-width="2.500" /><path d="M5 4H20V18H5Z" fill="#fff" stroke="#333" stroke-width="2.500" /><path d="M9 8H16V14H9Z" fill="#c2c2c2" /></symbol>
    <symbol id="i-samewidth" viewBox="0 0 36 36"><path d="M0 18L11 7V13H25V7L36 18L25 29V23H11V29Z" fill="url(#g-blue)" /></symbol>
    <symbol id="i-sameheight" viewBox="0 0 36 36"><path d="M18 0L28 11H22V25H28L18 36L8 25H14V11H8Z" fill="url(#g-blue)" /></symbol>
    <symbol id="i-spreadx" viewBox="0 0 36 36"><path d="M1 9H9V27H1ZM14 9H22V27H14ZM27 9H35V27H27Z" fill="#c3d4ee" stroke="#98a8c0" stroke-width="1.500" /></symbol>
    <symbol id="i-spready" viewBox="0 0 36 36"><path d="M15 1H21V9H15ZM15 14H21V22H15ZM15 27H21V35H15Z" fill="#c3d4ee" stroke="#98a8c0" stroke-width="1.500" /></symbol>
    <symbol id="i-fliph" viewBox="0 0 36 36"><path d="M35 2V34L18 18Z" fill="#5f7dbc" stroke="#222" stroke-width="2.500" /><path d="M1 2V34L18 18Z" fill="#9a9a9a" stroke="#222" stroke-width="2.500" /><path d="M5 12V25L11 18Z" fill="#ddd" stroke="#222" stroke-width="1.500" /><path d="M9 5H17V1L25 8L17 14V10H12Z" fill="#fff" stroke="#222" stroke-width="1.600" /></symbol>
    <symbol id="i-flipv" viewBox="0 0 36 36"><path d="M3 2H33L18 18Z" fill="#5f7dbc" stroke="#222" stroke-width="2.500" /><path d="M3 33H33L18 18Z" fill="#777" stroke="#222" stroke-width="2.500" /><path d="M12 29H24L18 22Z" fill="#bbb" stroke="#222" stroke-width="1.500" /><path d="M28 10L34 18H30V24H25V18H22Z" fill="#fff" stroke="#222" stroke-width="1.600" /></symbol>
    <symbol id="i-lock" viewBox="0 0 36 36"><path d="M9 18V10Q10 4 18 4Q26 4 27 10V18" fill="none" stroke="#222" stroke-width="6" /><path d="M9 18V10Q10 4 18 4Q26 4 27 10V18" fill="none" stroke="#ddd" stroke-width="2.500" /><path d="M5 18H31V33H5Z" fill="#f2e07c" stroke="#222" stroke-width="2.500" /></symbol>
    <symbol id="i-unlock" viewBox="0 0 36 36"><path d="M18 18V10Q19 4 26 4Q33 4 33 10V20" fill="none" stroke="#222" stroke-width="6" /><path d="M18 18V10Q19 4 26 4Q33 4 33 10V20" fill="none" stroke="#ddd" stroke-width="2.500" /><path d="M2 18H24V33H2Z" fill="#f2e07c" stroke="#222" stroke-width="2.500" /></symbol>
    <symbol id="i-unlockall" viewBox="0 0 36 36"><path d="M12 12Q10 5 16 2Q22 1 24 8L28 13" fill="none" stroke="#a4a8ae" stroke-width="2.500" /><path d="M12 16L27 18L29 26L19 35L7 30L6 22Z" fill="#f5b676" stroke="#d69a5e" /><path d="M12 18L20 19L12 27L8 24Z" fill="#fbe0b8" /></symbol>
    <symbol id="i-eye" viewBox="0 0 36 36"><ellipse cx="19" cy="21" rx="16" ry="11" fill="#7c8694" opacity=".6" /><path d="M1 18Q8 7 18 7Q30 8 34 17Q28 28 18 28Q8 28 1 18Z" fill="#f2f4f6" stroke="#98a0aa" /><circle cx="17" cy="17" r="8" fill="url(#g-eye)" /></symbol>
    <symbol id="i-eyeoff" viewBox="0 0 36 36"><path d="M3 19Q10 10 18 10Q28 10 33 18Q27 26 18 26Q8 26 3 19Z" fill="#f4f4f4" stroke="#222" stroke-width="2.500" /><circle cx="18" cy="18" r="6" fill="#111" /><path d="M31 4L34 8L10 32L6 28Z" fill="#fb7058" /></symbol>

    <symbol id="i-cursor" viewBox="0 0 56 88"><path d="M1 3V75L17 60L30 86L40 81L30 56L54 55Z" fill="#fff" stroke="#000" stroke-width="2" /></symbol>
    <symbol id="i-navpair" viewBox="0 0 108 52"><path d="M28 4Q54 12 80 4V30H28Z" fill="#9ca5b4" /><path d="M40 26H70V44H40Z" fill="#f3f6ff" /><path d="M36 46Q54 34 72 46" fill="none" stroke="#a8a8a8" stroke-width="2" /><g fill="#d5e2ff" stroke="#a0a0a0" stroke-width="3.500"><circle cx="26" cy="26" r="24" /><circle cx="82" cy="26" r="24" /></g><path d="M29 15V38L17 26ZM79 15V38L91 26Z" fill="#8a8a8a" /></symbol>
  </svg>

  <div class="page">
    <section class="callout" aria-label="Toolbar detail">
      <div v-for="a in quickActions" :key="a.icon" class="slot" :class="{ lit: a.active }">
        <svg><use :href="'#i-' + a.icon" /></svg>
        <template v-if="a.active">
          <span class="ring"></span>
          <svg class="cursor"><use href="#i-cursor" /></svg>
        </template>
      </div>
    </section>

    <div class="window">
      <header class="titlebar">
        <svg class="appicon"><use href="#i-cube" /></svg>
        <span class="apptitle">Project</span>
        <div class="winbtns">
          <button aria-label="Minimize"><svg viewBox="0 0 20 20"><path d="M0 10H20" stroke="#000" stroke-width="2" /></svg></button>
          <button aria-label="Maximize"><svg viewBox="0 0 20 20"><path d="M1 1H19V19H1Z" fill="none" stroke="#000" stroke-width="2" /></svg></button>
          <button aria-label="Close"><svg viewBox="0 0 20 20"><path d="M0 0L20 20M20 0L0 20" stroke="#000" stroke-width="2" /></svg></button>
        </div>
      </header>

      <div class="navstrip">
        <svg class="navpair"><use href="#i-navpair" /></svg>
        <svg class="tri"><use href="#i-tri" /></svg>
      </div>

      <div class="columns">
        <aside class="sidebar">
          <div class="shortcuts">
            <button v-for="s in shortcuts" :key="s" :aria-label="s"><svg><use :href="'#i-' + s" /></svg></button>
          </div>
          <div class="search">
            <svg><use href="#i-search" /></svg>
            <input type="text" placeholder="Search" aria-label="Search" />
          </div>
          <nav class="modules">
            <div v-for="m in modules" :key="m.label" class="module" :class="{ open: m.items }">
              <div class="bar">
                <svg class="icon">
                  <use :href="'#i-' + m.icon" />
                  <text v-if="glyphs[m.icon]" :class="glyphs[m.icon].cls" :x="glyphs[m.icon].x" :y="glyphs[m.icon].y">{{ glyphs[m.icon].char }}</text>
                </svg>
                <span>{{ m.label }}</span>
                <button class="toggle" :class="{ up: m.items }" :aria-label="m.label"><svg><use href="#i-tri" /></svg></button>
              </div>
              <div v-if="m.items" class="submenu">
                <a v-for="i in m.items" :key="i" href="#" :class="{ current: i === 'Draw' }">{{ i }}</a>
              </div>
              <span v-if="m.items" class="mark"></span>
            </div>
          </nav>
        </aside>

        <div class="splitter"></div>

        <main class="main">
          <div class="toolbar">
            <div v-for="(g, n) in mainTools" :key="n" class="toolgroup">
              <button v-for="t in g" :key="t" :aria-label="t">
                <svg>
                  <use :href="'#i-' + t" />
                  <text v-if="glyphs[t]" :class="glyphs[t].cls" :x="glyphs[t].x" :y="glyphs[t].y">{{ glyphs[t].char }}</text>
                </svg>
              </button>
            </div>
          </div>

          <div class="crumbs">
            <h1>Drawing / Display / MainPage</h1>
            <button class="drop" aria-label="Choose display"><svg><use href="#i-chev" /></svg></button>
            <div class="quick">
              <button v-for="a in quickActions" :key="a.icon" :class="{ lit: a.active }" :aria-label="a.label"><svg><use :href="'#i-' + a.icon" /></svg></button>
            </div>
          </div>

          <div class="tabs">
            <button class="tab on">Drawing</button>
            <button class="tab">CodeBehind</button>
          </div>

          <div class="workspace">
            <div class="editor">
              <div class="stage">
                <div class="toolbox">
                  <div v-for="(g, n) in toolbox" :key="n" class="boxgroup" :class="g.cls">
                    <button v-for="t in g.items" :key="t.icon" :class="{ on: t.on, more: t.more }" :aria-label="t.icon">
                      <svg>
                        <use :href="'#i-' + t.icon" />
                        <text v-if="glyphs[t.icon]" :class="glyphs[t.icon].cls" :x="glyphs[t.icon].x" :y="glyphs[t.icon].y">{{ glyphs[t.icon].char }}</text>
                      </svg>
                    </button>
                  </div>
                </div>
                <div class="viewport">
                  <div class="canvas"></div>
                  <div class="vscroll"><i class="arrow north"></i><span></span><i class="arrow south"></i></div>
                  <div class="hscroll"><i class="arrow west"></i><span></span><i class="arrow east"></i></div>
                  <div class="corner"></div>
                </div>
              </div>

              <div class="arrange">
                <button class="gridbtn" aria-label="Grid"><svg><use href="#i-grid" /></svg></button>
                <div class="zoom">
                  <input id="zoom" v-model="zoom" type="range" min="0" max="150" />
                  <div class="zoomrow">
                    <label for="zoom">Zoom</label>
                    <button class="drop small" aria-label="Zoom levels"><svg><use href="#i-chev" /></svg></button>
                  </div>
                </div>
                <div v-for="(g, n) in arrangeTools" :key="n" class="arrgroup">
                  <button v-for="t in g" :key="t" :aria-label="t"><svg><use :href="'#i-' + t" /></svg></button>
                </div>
              </div>
            </div>

            <div class="splitter thin"></div>

            <div class="props">
              <div class="tabs">
                <button class="tab on">Properties</button>
                <button class="tab">Tags</button>
              </div>
              <div class="propbody">
                <div class="glow">
                  <div v-for="s in sections" :key="s" class="section">
                    <button class="toggle" :class="{ up: s === 'Display Settings' }" :aria-label="s"><svg><use href="#i-tri" /></svg></button>
                    <h2>{{ s }}</h2>
                  </div>

                  <form class="settings" @submit.prevent>
                    <div v-for="f in fields" :key="f.label" class="field" :class="{ tight: f.off }">
                      <label :for="'f-' + f.label">{{ f.label }}:</label>
                      <div v-if="f.kind === 'select'" class="combo" :class="{ off: f.off }">
                        <select :id="'f-' + f.label" :disabled="f.off"><option>{{ f.value }}</option></select>
                        <span class="comboarrow"><svg><use href="#i-chev" /></svg></span>
                      </div>
                      <template v-else-if="f.kind === 'color'">
                        <input :id="'f-' + f.label" class="swatchbox" type="text" readonly />
                        <button class="dots" type="button">...</button>
                      </template>
                      <input v-else-if="f.kind === 'check'" :id="'f-' + f.label" class="box" type="checkbox" disabled />
                      <input v-else :id="'f-' + f.label" class="text" type="text" />
                    </div>

                    <div class="field titlerow">
                      <input id="f-title-on" class="box" type="checkbox" disabled />
                      <label for="f-title-on" class="dim">Title:</label>
                      <input class="text wide" type="text" aria-label="Title text" />
                      <button class="pick" type="button" aria-label="Title color"><span class="pale"></span></button>
                    </div>
                    <div class="field bgrow">
                      <label for="f-titlebg">Title background</label>
                      <button id="f-titlebg" class="pick" type="button"><span class="violet"></span></button>
                    </div>
                    <div class="field checkrow">
                      <input id="f-stay1" class="box" type="checkbox" checked disabled />
                      <label for="f-stay1">Stays open on page change</label>
                    </div>
                    <div class="field checkrow">
                      <input id="f-stay2" class="box" type="checkbox" checked disabled />
                      <label for="f-stay2">Stays open after losing focus</label>
                    </div>
                  </form>
                </div>
              </div>
            </div>
          </div>

          <footer class="status">
            <div class="dock"><button class="toggle up" aria-label="Output"><svg><use href="#i-tri" /></svg></button><span>Output</span></div>
            <div class="dock"><button class="toggle up" aria-label="Find Results"><svg><use href="#i-tri" /></svg></button><span>Find Results</span></div>
            <p>Production offline configuration</p>
          </footer>
        </main>
      </div>
    </div>
  </div>
</template>

<style>
body {
  background: #fff;
}
</style>

<style scoped>
.defs {
  position: absolute;
  width: 0;
  height: 0;
}

.page {
  box-sizing: border-box;
  padding: 49px 50px;
  font-family: "Noto Sans", "Open Sans", sans-serif;
  font-size: 22px;
  line-height: 30px;
  color: #000;
}

.page *,
.page *::before,
.page *::after {
  box-sizing: border-box;
}

button {
  display: flex;
  align-items: center;
  justify-content: center;
  margin: 0;
  padding: 0;
  border: 0;
  background: none;
  font: inherit;
  color: inherit;
}

input,
select {
  margin: 0;
  font: inherit;
  color: inherit;
}

svg {
  display: block;
  flex: none;
}

svg text {
  text-anchor: middle;
}

.g-help {
  font-size: 22px;
  font-weight: 700;
  fill: #0a0a0a;
}

.g-alarm {
  font-size: 19px;
  font-weight: 700;
  fill: #222;
}

.g-ok {
  font-size: 14px;
  fill: #222;
}

.g-letter {
  font-family: "Liberation Serif", serif;
  font-size: 36px;
  font-weight: 700;
  fill: #74b8f0;
  stroke: #14222e;
  stroke-width: 2px;
}

/* callout */
.callout {
  display: flex;
  width: 670px;
  height: 296px;
  margin: 0 auto 49px;
  padding: 72px 0 0 18px;
  border: 1px solid #222;
  border-radius: 24px;
  background: #eff3fe;
  box-shadow: 0 4px 6px rgba(0, 0, 0, .3);
}

.slot {
  position: relative;
  display: flex;
  align-items: center;
  justify-content: center;
  width: 108px;
  height: 100px;
}

.slot svg {
  width: 72px;
  height: 72px;
}

.slot.lit {
  border: 5px solid #e1e6ee;
  background: #d3e3fc;
}

.ring {
  position: absolute;
  inset: -17px -16px;
  border: 6px solid #f00;
  border-radius: 12px;
}

.slot .cursor {
  position: absolute;
  top: 84px;
  left: 51px;
  width: 56px;
  height: 88px;
}

/* window frame */
.window {
  border: 2px solid #1a1a1a;
  background: #ebf2fe;
  box-shadow: 0 5px 8px rgba(0, 0, 0, .3);
}

.titlebar {
  display: flex;
  align-items: center;
  height: 56px;
  padding: 0 36px 0 17px;
  background: #fff;
}

.appicon {
  width: 28px;
  height: 28px;
}

.apptitle {
  margin-left: 5px;
}

.winbtns {
  display: flex;
  gap: 73px;
  margin-left: auto;
}

.winbtns svg {
  width: 20px;
  height: 20px;
}

.navstrip {
  display: flex;
  align-items: center;
  gap: 6px;
  height: 60px;
  padding-left: 4px;
  background: #e6edfd;
}

.navpair {
  width: 108px;
  height: 52px;
}

.tri {
  width: 16px;
  height: 8px;
  color: #808080;
}

.columns {
  display: flex;
}

.splitter {
  flex: none;
  width: 16px;
  border: 2px solid #262626;
  background: #808080;
}

.splitter.thin {
  width: 10px;
}

/* sidebar */
.sidebar {
  flex: none;
  width: 322px;
  padding: 10px 14px 0 26px;
}

.shortcuts {
  display: flex;
  align-items: center;
  justify-content: space-between;
  height: 80px;
  margin-left: 2px;
  padding: 0 17px 0 15px;
  border-radius: 10px;
  background: #c2d8f3;
}

.shortcuts svg {
  width: 36px;
  height: 36px;
}

.search {
  display: flex;
  align-items: center;
  width: 242px;
  height: 48px;
  margin: 24px 0 8px;
  padding-left: 4px;
  border: 2px solid #add8e6;
  border-radius: 22px;
}

.search svg {
  width: 24px;
  height: 24px;
  margin-right: 10px;
}

.search input {
  width: 180px;
  height: 36px;
  padding: 2px 0 0 2px;
  border: 0;
  background: none;
  font-style: italic;
}

.search input::placeholder {
  color: #808080;
}

.modules {
  display: flex;
  flex-direction: column;
  gap: 6px;
  margin: 0 4px;
}

.module {
  position: relative;
}

.module.open {
  margin-bottom: 2px;
}

.mark {
  position: absolute;
  inset: -5px;
  border: 4px solid #f00;
  border-radius: 9px;
  pointer-events: none;
}

.bar {
  display: flex;
  align-items: center;
  height: 44px;
  padding: 0 4px 0 11px;
  border: 2px solid #999;
  border-radius: 4px;
  background: #bbd2fd;
}

.icon {
  width: 32px;
  height: 32px;
  margin-right: 19px;
}

.bar span {
  flex: 1;
  padding-top: 2px;
}

.toggle {
  flex: none;
  width: 30px;
  height: 32px;
  border: 2px solid #999;
  border-radius: 3px;
  background: linear-gradient(#d3e2ff 50%, #bfd5fe 50%, #c8dbfe);
}

.toggle svg {
  width: 16px;
  height: 8px;
}

.toggle.up svg {
  transform: rotate(180deg);
}

.submenu {
  display: flex;
  flex-direction: column;
  gap: 8px;
  margin-top: 2px;
  padding: 6px 6px 4px;
  border: 2px solid #999;
  border-top: 0;
  border-radius: 8px;
  background: #cadcfe;
}

.submenu a {
  height: 36px;
  padding-left: 14px;
  border-radius: 10px;
  background: #d2e0ff;
  line-height: 36px;
  color: #50555e;
  text-decoration: none;
}

.submenu a.current {
  height: 46px;
  margin: 0 5px;
  padding-left: 12px;
  border-radius: 6px;
  background: #e19db1;
  font-size: 26px;
  line-height: 46px;
  color: #4a0000;
}

/* main column */
.main {
  flex: 1;
  min-width: 0;
  padding: 6px 6px 0;
}

.toolbar {
  display: flex;
  height: 56px;
  padding: 0 0 2px 6px;
  background: #c2d8f3;
}

.toolgroup {
  display: flex;
  align-items: center;
}

.toolgroup + .toolgroup::before {
  content: "";
  width: 2px;
  height: 38px;
  margin: 0 4px;
  background: #808080;
}

.toolgroup button,
.arrgroup button {
  width: 48px;
  height: 48px;
}

.toolgroup svg,
.arrgroup svg {
  width: 36px;
  height: 36px;
}

.crumbs {
  display: flex;
  align-items: center;
  height: 80px;
  margin: 15px 0 17px;
  padding-left: 18px;
}

h1 {
  margin: 4px 17px 0 0;
  font-size: 26px;
  line-height: 36px;
  font-weight: 400;
  white-space: nowrap;
}

.drop {
  width: 40px;
  height: 40px;
  border: 2px solid #999;
  border-radius: 8px;
  background: linear-gradient(#d3e2ff 50%, #bbd2fd 50%);
  box-shadow: inset 0 0 0 3px #d6e4ff;
}

.drop svg {
  width: 20px;
  height: 16px;
}

.quick {
  display: flex;
  align-items: center;
  height: 80px;
  margin-left: 2px;
  padding: 0 10px 0 8px;
  border: 6px solid #f00;
  border-radius: 12px;
}

.quick button {
  width: 48px;
  height: 44px;
}

.quick button.lit {
  border: 2px solid #e3e6ea;
  background: #cde4fd;
}

.quick svg {
  width: 32px;
  height: 32px;
}

.tabs {
  position: relative;
  z-index: 1;
  display: flex;
  align-items: flex-end;
  height: 46px;
  margin-bottom: -2px;
}

.tab {
  height: 42px;
  margin-left: -2px;
  padding: 0 11px;
  border: 2px solid #acacac;
  background: linear-gradient(#f0f0f0, #e5e5e5);
}

.tab.on {
  height: 46px;
  margin-left: 0;
  padding: 0 15px 2px;
  border-bottom: 0;
  background: #fff;
}

.workspace {
  display: flex;
  padding: 4px;
  border: 2px solid #acacac;
}

.editor {
  display: flex;
  flex: 1;
  flex-direction: column;
  min-width: 0;
}

.stage {
  display: flex;
  flex: 1;
  border-bottom: 2px solid #a8a8a8;
}

.toolbox {
  flex: none;
  width: 62px;
  padding: 6px 6px 0 4px;
  border: 2px solid #a8a8a8;
  border-bottom: 0;
  background: linear-gradient(#98c0fe 25%, #b4d0ff 60%, #cbdefe);
}

.boxgroup + .boxgroup::before {
  content: "";
  display: block;
  height: 2px;
  margin: 6px 4px;
  background: #808080;
}

.boxgroup button {
  position: relative;
  width: 48px;
  height: 44px;
}

.boxgroup.mid button {
  height: 43px;
}

.boxgroup.low button {
  height: 42px;
}

.boxgroup button.on {
  height: 48px;
  border: 2px solid #b4d0fa;
  background: #74b0ff;
}

.boxgroup button.more::after {
  content: "";
  position: absolute;
  right: 0;
  bottom: 0;
  border: 6px solid;
  border-color: transparent #fff #fff transparent;
}

.boxgroup svg {
  width: 32px;
  height: 32px;
}

.viewport {
  display: grid;
  flex: 1;
  grid-template-columns: 1fr 24px;
  grid-template-rows: 1fr 34px;
}

.canvas {
  background: #e4e4e4;
}

.vscroll {
  display: flex;
  flex-direction: column;
  align-items: flex-end;
  padding: 7px 0 10px;
  background: #bbd2fd;
}

.vscroll span {
  flex: 1;
  width: 15px;
  margin: 197px 0 24px;
  border-radius: 6px 0 0 6px;
  background: #dce8fd;
}

.hscroll {
  display: flex;
  align-items: center;
  padding: 0 9px 0 6px;
  background: #bbd2fd;
}

.hscroll span {
  width: 54%;
  height: 16px;
  margin: 0 auto 0 121px;
  border-radius: 7px;
  background: #dce8fd;
}

.corner {
  background: #f0f0f0;
}

.arrow {
  flex: none;
  background: #8598bc;
}

.north,
.south {
  width: 15px;
  height: 18px;
}

.north {
  clip-path: polygon(50% 0, 100% 100%, 0 100%);
}

.south {
  clip-path: polygon(0 0, 100% 0, 50% 100%);
}

.west,
.east {
  width: 19px;
  height: 16px;
}

.west {
  clip-path: polygon(0 50%, 100% 0, 100% 100%);
}

.east {
  clip-path: polygon(0 0, 100% 50%, 0 100%);
}

/* arrange bar */
.arrange {
  display: flex;
  height: 72px;
  padding: 0 12px;
  background: linear-gradient(90deg, #98c0fe, #b4d2ff 45%, #d3e2ff 85%);
}

.gridbtn {
  width: 36px;
  height: 72px;
}

.gridbtn svg {
  width: 36px;
  height: 36px;
}

.zoom {
  width: 160px;
  margin: 8px 33px 0 6px;
}

.zoom input {
  display: block;
  width: 160px;
  height: 28px;
  appearance: none;
  background: none;
}

.zoom input::-webkit-slider-runnable-track {
  height: 8px;
  border: 2px solid #999;
  border-radius: 4px;
  background: #d6e4ff;
}

.zoom input::-webkit-slider-thumb {
  width: 40px;
  height: 28px;
  margin-top: -12px;
  appearance: none;
  border: 2px solid #999;
  border-radius: 7px;
  background: linear-gradient(#d8e5ff, #c6daff);
}

.zoomrow {
  display: flex;
  align-items: center;
  justify-content: flex-end;
  gap: 18px;
  font-size: 19px;
}

.zoomrow label {
  padding-top: 3px;
}

.drop.small {
  height: 30px;
}

.drop.small svg {
  width: 18px;
  height: 14px;
}

.arrgroup {
  display: flex;
  align-items: center;
  height: 72px;
}

.arrgroup + .arrgroup {
  margin-left: 34px;
}

/* properties */
.props {
  display: flex;
  flex: none;
  flex-direction: column;
  width: 470px;
}

.propbody {
  padding: 4px;
  border: 2px solid #acacac;
  background: #fff;
}

.glow {
  display: flex;
  flex-direction: column;
  padding: 4px 28px 23px 4px;
  border: 4px solid #cdf3fe;
  border-radius: 24px;
  background: #d8e6fe;
}

.section {
  display: flex;
  align-items: center;
  gap: 12px;
  height: 44px;
  margin-bottom: 8px;
  padding-left: 4px;
  border: 2px solid #999;
  border-radius: 4px;
  background: #bbd2fd;
}

.section:nth-of-type(6) {
  margin-bottom: 2px;
}

h2 {
  margin: 0;
  font-size: 22px;
  line-height: 30px;
  font-weight: 700;
}

.settings {
  padding-top: 2px;
  border: 2px solid #999;
  border-top: 0;
  border-radius: 8px;
  background: #cadcfe;
  color: #1e1e1e;
}

.field {
  display: flex;
  align-items: center;
  height: 56px;
}

.field > label:first-child {
  width: 204px;
  margin-right: 8px;
  text-align: right;
}

.field.tight > label:first-child {
  width: 212px;
  margin-right: 0;
}

.combo {
  position: relative;
  width: 170px;
  height: 44px;
  border: 2px solid #999;
  border-radius: 6px;
  background: #d3e2ff;
}

.combo::before {
  content: "";
  position: absolute;
  inset: 0 38px 0 0;
  border-right: 2px solid #999;
  border-radius: 0 5px 5px 0;
}

.combo select {
  width: 100%;
  height: 100%;
  padding: 2px 40px 0 5px;
  appearance: none;
  border: 0;
  background: none;
  opacity: 1;
}

.comboarrow {
  position: absolute;
  top: 2px;
  right: 2px;
  display: flex;
  align-items: center;
  justify-content: center;
  width: 33px;
  height: 36px;
  border-radius: 5px;
  background: linear-gradient(#d3e2ff 50%, #bbd2fd 50%);
  color: #111;
  pointer-events: none;
}

.comboarrow svg {
  width: 20px;
  height: 16px;
}

.combo.off {
  border-color: #b8c2d8;
  background: #cfdffe;
}

.combo.off::before {
  border-color: #b8c2d8;
}

.combo.off .comboarrow {
  background: linear-gradient(#c5d2e8 50%, #bac8de 50%);
  color: #abb8cf;
}

.text,
.swatchbox {
  width: 170px;
  height: 40px;
  padding: 0 6px;
  border: 2px solid #000;
  border-radius: 4px;
  background: #fafcff;
}

.swatchbox {
  width: 134px;
  border-radius: 0;
  background: #e4e4e4;
}

.dots {
  width: 37px;
  height: 44px;
  margin-left: 1px;
  border: 2px solid #999;
  border-radius: 6px;
  background: linear-gradient(#cfdffe 50%, #bbd2fd 50%);
}

.box {
  flex: none;
  width: 28px;
  height: 28px;
  margin: 0 0 0 2px;
  appearance: none;
  border: 2px solid #b8c2d8;
  background: #d0dffe;
}

.box:checked::before {
  content: "";
  display: block;
  width: 24px;
  height: 24px;
  background: #5f6e86;
  clip-path: polygon(14% 54%, 32% 52%, 44% 70%, 58% 36%, 84% 8%, 94% 10%, 72% 44%, 52% 98%, 40% 98%);
}

.titlerow .box {
  margin: 0 12px 0 10px;
}

.dim {
  width: 68px;
  color: #aab6cc;
}

.text.wide {
  width: 180px;
  margin-right: 6px;
}

.pick {
  width: 80px;
  height: 40px;
  border: 2px solid #b8c2d8;
  border-radius: 6px;
  background: #d0dffe;
}

.pick span {
  width: 60px;
  height: 28px;
  border: 2px solid #66758c;
  background: #e2ecff;
}

.pick .violet {
  background: #6873fd;
}

.field.bgrow > label:first-child {
  width: 236px;
  margin: 0;
  padding-left: 2px;
  text-align: left;
}

.checkrow .box {
  margin: 0 12px 0 14px;
}

.checkrow label {
  color: #7a869c;
}

/* status bar */
.status {
  display: flex;
  align-items: center;
  gap: 8px;
  height: 62px;
  padding: 2px 80px 0 4px;
}

.dock {
  display: flex;
  align-items: center;
  gap: 12px;
  width: 192px;
  height: 44px;
  padding-left: 4px;
  border: 2px solid #999;
  border-radius: 4px;
  background: #bbd2fd;
}

.dock span {
  white-space: nowrap;
}

.status p {
  margin: 0 0 4px auto;
}
</style>
